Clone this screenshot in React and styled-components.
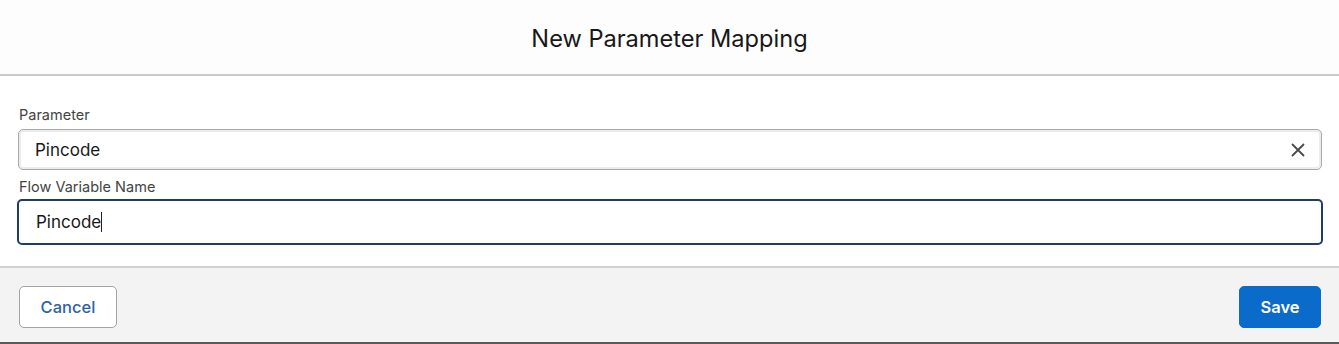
import React from "react";
import styled, { createGlobalStyle } from "styled-components";

const Global = createGlobalStyle`
  html, body { margin: 0; padding: 0; background: #ffffff; }
  body { font-family: Inter, "Open Sans", "Liberation Sans", sans-serif; color: #181818; }
  * { box-sizing: border-box; }
`;

const Modal = styled.div`
  width: 1339px;
  height: 344px;
  display: flex;
  flex-direction: column;
  background: #fff;
  border-bottom: 2px solid #5a5a5a;
`;

const Header = styled.header`
  height: 76px;
  flex: none;
  display: flex;
  align-items: center;
  justify-content: center;
  border-bottom: 2px solid #c9c9c9;
  background: #fdfdfd;
`;

const Title = styled.h2`
  margin: 0;
  padding-top: 2px;
  font-size: 23.6px;
  font-weight: 400;
  color: #181818;
`;

const Body = styled.div`
  flex: 1;
  display: flex;
  flex-direction: column;
  padding: 29px 16px 0 17px;
  background: #ffffff;
`;

const Field = styled.div`
  display: flex;
  flex-direction: column;
  margin-top: ${(p) => p.$gap || 0}px;
`;

const Label = styled.label`
  font-size: 14.5px;
  line-height: 20px;
  color: #444;
  padding-left: 2px;
  margin-bottom: ${(p) => p.$mb || 4}px;
`;

const InputBox = styled.div`
  height: ${(p) => (p.$focused ? 46 : 41)}px;
  margin: ${(p) => (p.$focused ? "0" : "0 1px")};
  display: flex;
  align-items: center;
  padding: 0 14px 0 ${(p) => (p.$focused ? 17 : 16)}px;
  border-radius: 5px;
  background: #fff;
  border: ${(p) => (p.$focused ? "2.5px solid #1d3d6e" : "1px solid #a9a9a9")};
  box-shadow: ${(p) => (p.$focused ? "none" : "inset 0 0 0 2px #ececec")};
  font-size: 17px;
  color: #181818;
`;

const Value = styled.span`
  flex: 1;
`;

const Caret = styled.span`
  display: inline-block;
  width: 1px;
  height: 20px;
  background: #222;
  vertical-align: -4px;
`;

const Clear = styled.button`
  border: 0;
  background: none;
  padding: 0;
  width: 18px;
  height: 18px;
  display: flex;
  align-items: center;
  justify-content: center;
  color: #4a4a4a;
`;

const Footer = styled.footer`
  height: 76px;
  flex: none;
  display: flex;
  align-items: flex-start;
  justify-content: space-between;
  padding: 18px 18px 0 19px;
  background: #f3f3f3;
  border-top: 2px solid #d0d0d0;
`;

const Button = styled.button`
  height: 42px;
  min-width: ${(p) => (p.$primary ? 82 : 98)}px;
  padding: 0 16px;
  border-radius: 5px;
  font-family: inherit;
  font-size: 16.5px;
  font-weight: ${(p) => (p.$primary ? 600 : 500)};
  color: ${(p) => (p.$primary ? "#ffffff" : "#2e62a8")};
  background: ${(p) => (p.$primary ? "#0b6bcb" : "#ffffff")};
  border: ${(p) => (p.$primary ? "1px solid #0b6bcb" : "1px solid #a3a3a3")};
`;

export default function App() {
  return (
    <>
      <Global />
      <Modal>
        <Header>
          <Title>New Parameter Mapping</Title>
        </Header>
        <Body>
          <Field>
            <Label>Parameter</Label>
            <InputBox>
              <Value>Pincode</Value>
              <Clear aria-label="Clear">
                <svg width="14" height="14" viewBox="0 0 14 14">
                  <path d="M1.5 1.5 L12.5 12.5 M12.5 1.5 L1.5 12.5" stroke="currentColor" strokeWidth="1.8" strokeLinecap="round" />
                </svg>
              </Clear>
            </InputBox>
          </Field>
          <Field $gap={7}>
            <Label $mb={2}>Flow Variable Name</Label>
            <InputBox $focused>
              <Value>
                Pincode<Caret />
              </Value>
            </InputBox>
          </Field>
        </Body>
        <Footer>
          <Button>Cancel</Button>
          <Button $primary>Save</Button>
        </Footer>
      </Modal>
    </>
  );
}
